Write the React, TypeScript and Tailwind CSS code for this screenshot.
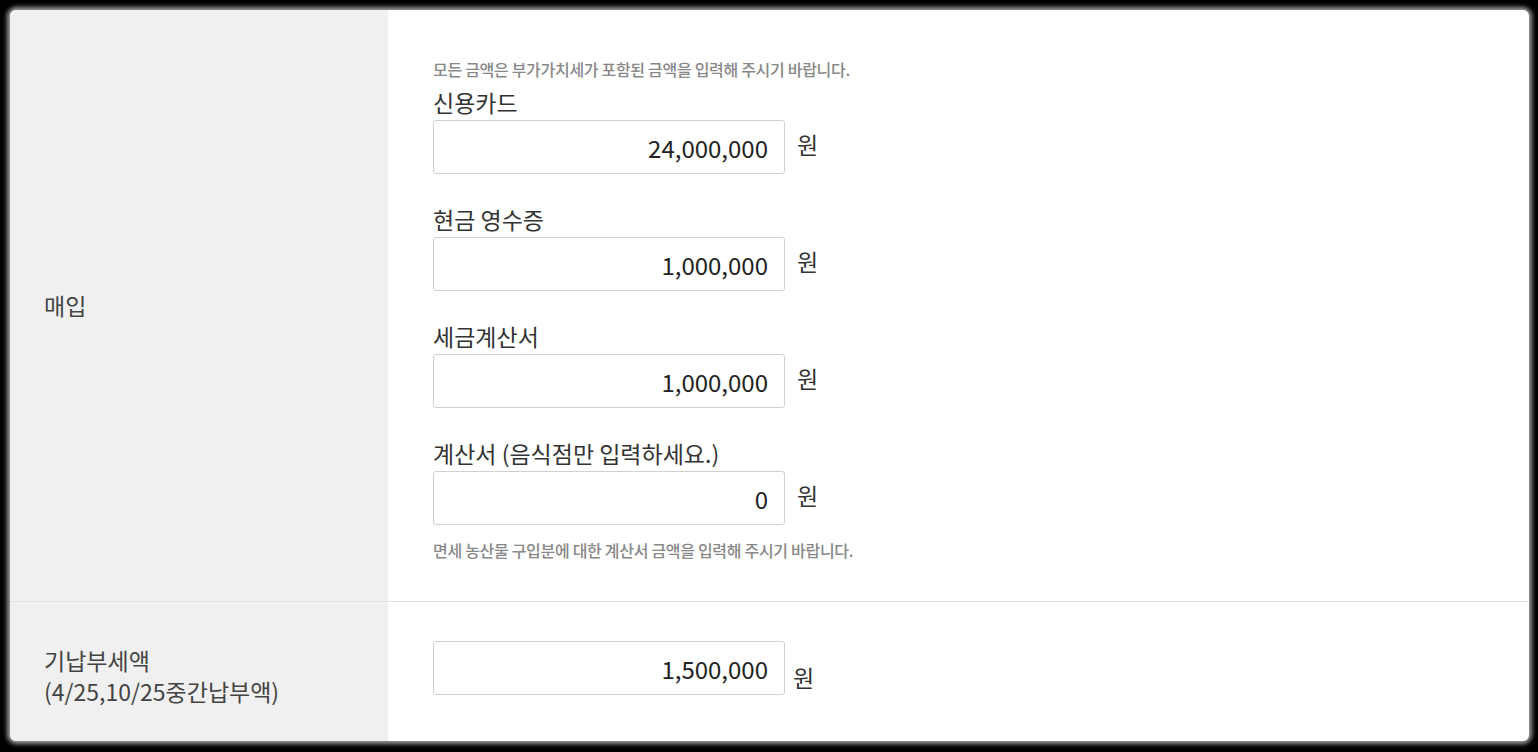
const font = { fontFamily: '"Noto Sans CJK KR", "Noto Sans", sans-serif' };

const fields = [
  { label: '신용카드', value: '24,000,000' },
  { label: '현금 영수증', value: '1,000,000' },
  { label: '세금계산서', value: '1,000,000' },
  { label: '계산서 (음식점만 입력하세요.)', value: '0' },
];

function AmountInput({ value }: { value: string }) {
  return (
    <input
      readOnly
      value={value}
      className="h-[54px] w-[352px] rounded-[3px] border border-[#d0d0d0] bg-white px-[16px] text-right text-[24px] text-[#222] outline-none"
      style={font}
    />
  );
}

export default function App() {
  return (
    <div className="h-[752px] w-full bg-black pl-[10px] pr-[9px] pt-[10px] pb-[11px]" style={font}>
      <div className="grid h-full grid-cols-[378px_1fr] grid-rows-[592px_1fr] overflow-hidden rounded-[6px] bg-white shadow-[0_0_4px_3px_rgba(170,170,170,0.9)]">
        {/* 매입 */}
        <div className="flex items-center border-b border-[#e2e2e2] bg-[#f0f0f0] pl-[34px] text-[23px] text-[#444]">
          매입
        </div>
        <div className="flex flex-col border-b border-[#e2e2e2] pl-[45px] pt-[48px]">
          <p className="text-[16px] font-medium leading-[22px] tracking-[-0.3px] text-[#888]">
            모든 금액은 부가가치세가 포함된 금액을 입력해 주시기 바랍니다.
          </p>
          <div className="mt-[6px] flex flex-col gap-[29px]">
            {fields.map((f) => (
              <div key={f.label} className="flex flex-col gap-[2px]">
                <div className="text-[23px] leading-[32px] text-[#333]">{f.label}</div>
                <div className="flex items-start gap-[12px]">
                  <AmountInput value={f.value} />
                  <span className="pt-[8px] text-[23px] leading-[32px] text-[#333]">원</span>
                </div>
              </div>
            ))}
          </div>
          <p className="mt-[14px] text-[16px] font-medium leading-[22px] tracking-[-0.3px] text-[#888]">
            면세 농산물 구입분에 대한 계산서 금액을 입력해 주시기 바랍니다.
          </p>
        </div>

        {/* 기납부세액 */}
        <div className="flex flex-col justify-center gap-[1px] bg-[#f0f0f0] pl-[34px] pt-[8px] text-[23px] leading-[30px] text-[#444]">
          <span>기납부세액</span>
          <span>(4/25,10/25중간납부액)</span>
        </div>
        <div className="flex pl-[45px] pt-[39px]">
          <div className="flex items-end gap-[8px] self-start">
            <AmountInput value="1,500,000" />
            <span className="mb-[2px] text-[23px] leading-[32px] text-[#333]">원</span>
          </div>
        </div>
      </div>
    </div>
  );
}
